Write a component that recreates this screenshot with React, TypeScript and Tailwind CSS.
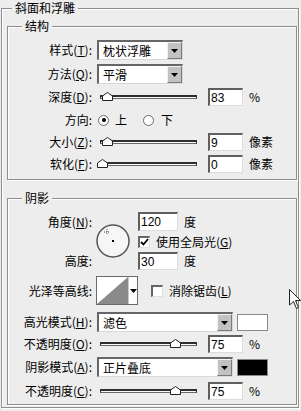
import type { ReactNode } from "react";

const etched =
  "border border-[#8e8e8e] shadow-[1px_1px_0_#ffffff,inset_1px_1px_0_#ffffff]";

function Key({ ch }: { ch: string }) {
  return <span className="underline underline-offset-[1px]">{ch}</span>;
}

function Label({ children }: { children: ReactNode }) {
  return <div className="w-[84px] shrink-0 text-right">{children}</div>;
}

function TextBox({ value, w = "w-[35px]", h = "h-[18px]" }: { value: string; w?: string; h?: string }) {
  return (
    <div
      className={`flex ${w} ${h} items-center border-t-2 border-l-2 border-r border-b border-t-[#5f5f5f] border-l-[#5f5f5f] border-r-[#dcdcdc] border-b-[#dcdcdc] bg-white pl-[1px] font-['Liberation_Sans',sans-serif] text-[12px]`}
    >
      {value}
    </div>
  );
}

function Arrow() {
  return (
    <svg width="7" height="4" viewBox="0 0 7 4">
      <path d="M0 0 L7 0 L3.5 4 Z" fill="#000" />
    </svg>
  );
}

function Select({ value, w }: { value: string; w: string }) {
  return (
    <div
      className={`ml-[5px] flex h-[20px] ${w} items-stretch border-t-2 border-l-2 border-r border-b border-t-[#666] border-l-[#666] border-r-[#d8d8d8] border-b-[#d8d8d8] bg-white`}
    >
      <div className="flex flex-1 items-center pl-[4px]">{value}</div>
      <div className="flex w-[15px] items-center justify-center border border-t-[#f2f2f2] border-l-[#f2f2f2] border-r-[#7a7a7a] border-b-[#7a7a7a] bg-[#c2c2c2]">
        <Arrow />
      </div>
    </div>
  );
}

function Slider({ thumb }: { thumb: string }) {
  return (
    <div className="relative ml-[8px] h-[4px] w-[97px] border-t-2 border-b border-l border-r border-[#2e2e2e] border-b-[#6a6a6a] bg-[#fafafa]">
      <svg
        className={`absolute top-[-5px] ${thumb}`}
        width="11"
        height="9"
        viewBox="0 0 11 9"
      >
        <polygon points="0.5,8.5 0.5,4 5.5,0.5 10.5,4 10.5,8.5" fill="#fff" stroke="#222" />
      </svg>
    </div>
  );
}

function SliderRow({ label, thumb, value, unit }: { label: ReactNode; thumb: string; value: string; unit: string }) {
  return (
    <div className="flex h-[18px] items-center">
      <Label>{label}</Label>
      <Slider thumb={thumb} />
      <div className="ml-[11px]">
        <TextBox value={value} />
      </div>
      <span className="ml-[6px]">{unit}</span>
    </div>
  );
}

function Check({ on }: { on: boolean }) {
  return (
    <div className="flex h-[12px] w-[12px] items-center justify-center border-t-2 border-l-2 border-r border-b border-t-[#666] border-l-[#666] border-r-[#e0e0e0] border-b-[#e0e0e0] bg-white">
      {on && (
        <svg width="9" height="8" viewBox="0 0 9 8">
          <path d="M1 4 L3.5 6.5 L8 1" fill="none" stroke="#000" strokeWidth="1.8" />
        </svg>
      )}
    </div>
  );
}

function Radio({ on }: { on: boolean }) {
  return (
    <div className="flex h-[11px] w-[11px] items-center justify-center rounded-full border border-[#6a6a6a] bg-white">
      {on && <div className="h-[4px] w-[4px] rounded-full bg-black" />}
    </div>
  );
}

function Swatch({ color }: { color: string }) {
  return <div className={`ml-[4px] h-[17px] w-[31px] border border-[#8a8a8a] ${color}`} />;
}

function Dial() {
  return (
    <svg width="34" height="34" viewBox="0 0 34 34">
      <circle cx="17" cy="17" r="16" fill="#f6f6f6" stroke="#555" strokeWidth="1.5" />
      <path d="M11 5 V11 M8 8 H14" stroke="#444" strokeWidth="1" strokeDasharray="1 1" />
      <rect x="16" y="16" width="2" height="2" fill="#000" />
    </svg>
  );
}

function Contour() {
  return (
    <div className="ml-[4px] flex h-[29px] w-[42px] border border-[#6a6a6a] bg-white">
      <svg width="31" height="27" viewBox="0 0 31 27">
        <rect x="0" y="0" width="31" height="27" fill="#ffffff" />
        <polygon points="0,27 31,0 31,27" fill="#8a8a8a" />
      </svg>
      <div className="flex flex-1 items-center justify-center border-l border-[#c8c8c8]">
        <Arrow />
      </div>
    </div>
  );
}

export default function App() {
  return (
    <div className="relative h-[411px] w-[301px] overflow-hidden bg-[#ededed] pt-[1px] font-['Noto_Sans_CJK_SC',sans-serif] text-[12px] leading-[14px] text-black">
      <fieldset className={`ml-[1px] w-[298px] pb-[2px] ${etched}`}>
        <legend className="ml-[10px] bg-[#ededed] px-[3px] leading-[14px]">斜面和浮雕</legend>

        {/* 结构 */}
        <fieldset className={`mt-[4px] ml-[5px] w-[290px] pt-[7px] pb-[6px] ${etched}`}>
          <legend className="ml-[14px] bg-[#ededed] px-[3px] leading-[14px]">结构</legend>

          <div className="flex h-[20px] items-center">
            <Label>
              样式(<Key ch="T" />):
            </Label>
            <Select value="枕状浮雕" w="w-[86px]" />
          </div>

          <div className="mt-[4px] flex h-[20px] items-center">
            <Label>
              方法(<Key ch="Q" />):
            </Label>
            <Select value="平滑" w="w-[86px]" />
          </div>

          <div className="mt-[4px]">
            <SliderRow
              label={<>深度(<Key ch="D" />):</>}
              thumb="left-[1px]"
              value="83"
              unit="%"
            />
          </div>

          <div className="mt-[5px] flex h-[18px] items-center">
            <Label>方向:</Label>
            <div className="ml-[6px]">
              <Radio on />
            </div>
            <span className="ml-[6px]">上</span>
            <div className="ml-[16px]">
              <Radio on={false} />
            </div>
            <span className="ml-[7px]">下</span>
          </div>

          <div className="mt-[4px]">
            <SliderRow
              label={<>大小(<Key ch="Z" />):</>}
              thumb="left-[1px]"
              value="9"
              unit="像素"
            />
          </div>

          <div className="mt-[4px]">
            <SliderRow
              label={<>软化(<Key ch="F" />):</>}
              thumb="left-[-4px]"
              value="0"
              unit="像素"
            />
          </div>
        </fieldset>

        {/* 阴影 */}
        <fieldset className={`mt-[11px] ml-[5px] w-[290px] pt-[7px] pb-[4px] ${etched}`}>
          <legend className="ml-[14px] bg-[#ededed] px-[3px] leading-[14px]">阴影</legend>

          <div className="flex h-[58px]">
            <div className="flex w-[84px] shrink-0 flex-col justify-between text-right">
              <div className="flex h-[19px] items-center justify-end">
                角度(<Key ch="N" />):
              </div>
              <div className="flex h-[18px] items-center justify-end">高度:</div>
            </div>
            <div className="ml-[4px] flex items-center">
              <Dial />
            </div>
            <div className="ml-[8px] flex flex-col">
              <div className="flex items-center">
                <TextBox value="120" w="w-[40px]" h="h-[19px]" />
                <span className="ml-[6px]">度</span>
              </div>
              <div className="flex h-[21px] items-center">
                <Check on />
                <span className="ml-[6px]">
                  使用全局光(<Key ch="G" />)
                </span>
              </div>
              <div className="flex items-center">
                <TextBox value="30" w="w-[40px]" />
                <span className="ml-[6px]">度</span>
              </div>
            </div>
          </div>

          <div className="mt-[6px] flex h-[29px] items-center">
            <Label>光泽等高线:</Label>
            <Contour />
            <div className="ml-[13px]">
              <Check on={false} />
            </div>
            <span className="ml-[6px]">
              消除锯齿(<Key ch="L" />)
            </span>
          </div>

          <div className="mt-[7px] flex h-[20px] items-center">
            <Label>
              高光模式(<Key ch="H" />):
            </Label>
            <Select value="滤色" w="w-[136px]" />
            <Swatch color="bg-white" />
          </div>

          <div className="mt-[3px]">
            <SliderRow
              label={<>不透明度(<Key ch="O" />):</>}
              thumb="left-[69px]"
              value="75"
              unit="%"
            />
          </div>

          <div className="mt-[4px] flex h-[20px] items-center">
            <Label>
              阴影模式(<Key ch="A" />):
            </Label>
            <Select value="正片叠底" w="w-[136px]" />
            <Swatch color="bg-black" />
          </div>

          <div className="mt-[5px]">
            <SliderRow
              label={<>不透明度(<Key ch="C" />):</>}
              thumb="left-[69px]"
              value="75"
              unit="%"
            />
          </div>
        </fieldset>
      </fieldset>

      {/* 鼠标 */}
      <svg className="pointer-events-none absolute left-[289px] top-[289px]" width="13" height="21" viewBox="0 0 13 21">
        <path d="M0.5 0.5 L0.5 16 L4.5 12.5 L7.5 19.5 L9.5 18.5 L6.5 11.5 L11.5 11.5 Z" fill="#fff" stroke="#222" strokeWidth="1" />
      </svg>
    </div>
  );
}
